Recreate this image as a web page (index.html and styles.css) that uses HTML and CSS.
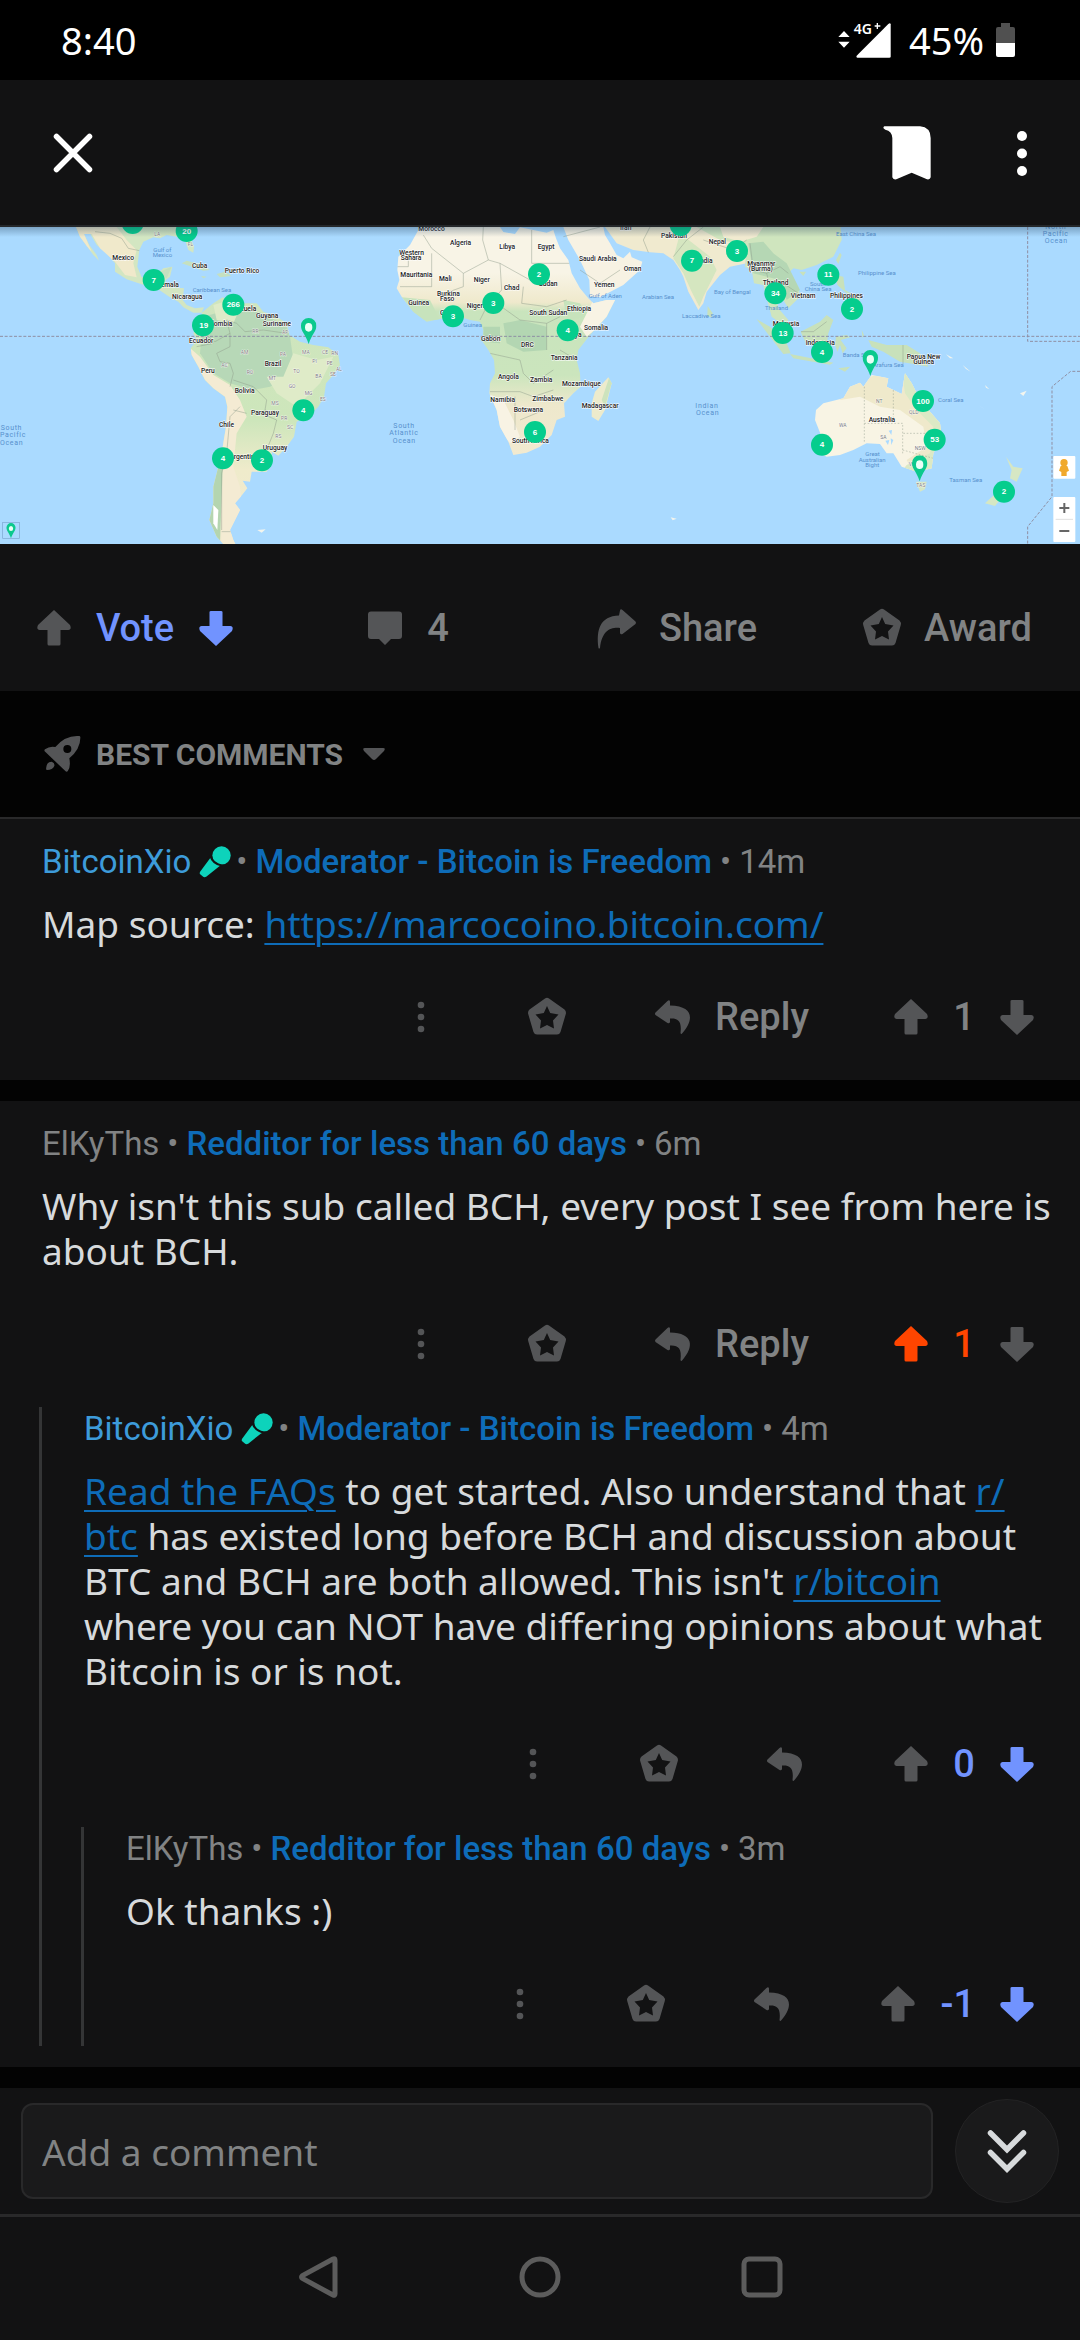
FILE: index.html
```html
<!DOCTYPE html>
<html lang="en">
<head>
<meta charset="utf-8">
<meta name="viewport" content="width=device-width, initial-scale=1">
<title>Comments</title>
<link rel="stylesheet" href="styles.css">
</head>
<body>
<svg class="sprite" aria-hidden="true">
  <symbol id="up" viewBox="0 0 48 48"><path d="M24 6 40 21Q42 25.500 38.500 26H30.500V40Q30.500 41.500 29 41.500H19Q17.500 41.500 17.500 40V26H9.500Q6 25.500 8 21Z"/></symbol>
  <symbol id="down" viewBox="0 0 48 48"><path d="M24 42 40 27Q42 22.500 38.500 22H30.500V8Q30.500 7 29 7H19Q17.500 7 17.500 8V22H9.500Q6 22.500 8 27Z"/></symbol>
  <symbol id="bubble" viewBox="0 0 48 48"><path d="M10 7.500H38Q41 7.500 41 10.500V32Q41 35 38 35H30L24 41 18 35H10Q7 35 7 32V10.500Q7 7.500 10 7.500Z"/></symbol>
  <symbol id="share" viewBox="0 0 48 48"><path d="M27 6.500Q27.500 4.500 29.500 6L42.500 17.500Q43.500 18.700 42.500 20L29.500 30Q27.500 31 27 29V24C17 23 9 27 7 44Q6 45 5.500 44C3 26 7 12 26 11.500Z"/></symbol>
  <symbol id="award" viewBox="0 0 48 48"><path fill-rule="evenodd" d="M22 5.500Q24 4 26 5.500L41.500 16.500Q43.500 18.500 42.800 21L37.500 39Q36.500 41.500 34 41.500H14Q11.500 41.500 10.500 39L5.200 21Q4.500 18.500 6.500 16.500ZM24 13 20.800 20 12.500 21.500 18 27.500 17 35.500 24 32 31 35.500 30 27.500 35.500 21.500 27.200 20Z"/></symbol>
  <symbol id="reply" viewBox="0 0 48 48"><path d="M21 8.500Q20.500 6.500 18.500 8L6.500 19.500Q5.500 20.700 6.500 22L18.500 30Q20.500 31 21 29V25.500C29 25 33 28 31.500 40Q32 42 33.500 40C45 27 45 13 21 12.500Z"/></symbol>
  <symbol id="dots" viewBox="0 0 48 48"><circle cx="24" cy="12" r="3.300"/><circle cx="24" cy="24" r="3.300"/><circle cx="24" cy="36" r="3.300"/></symbol>
  <symbol id="mic" viewBox="530 761 104 104"><circle cx="602" cy="793" r="28"/><path stroke="#121213" stroke-width="6" d="M568 795Q575 818 603 824L556 861Q549 865 541 858L533 851Q531 846 534 841Z"/></symbol>
  <symbol id="pin" viewBox="0 0 48 78"><path fill-rule="evenodd" d="M24 0A23 23 0 0 1 47 24C47 40 34 48 24 78 14 48 1 40 1 24A23 23 0 0 1 24 0ZM24 15A11 13 0 0 0 24 41 11 13 0 0 0 24 15Z"/></symbol>
</svg>

<div class="status">
  <span>8:40</span>
  <div class="status-right">
    <svg class="signal" viewBox="54 66 159 108" role="img" aria-label="4G plus signal"><path d="M55 111 72 93 89 111ZM55 125 72 143 89 125Z"/><path d="M212 73V170Q212 173 208 173H112Q107 172 110 167L205 72Q211 67 212 73Z"/><text x="101" y="101">4G</text><path d="M164 78H181M172 69V87" stroke="#fff" stroke-width="4"/></svg>
    <span>45%</span>
    <svg class="battery" viewBox="0 0 19 34" role="img" aria-label="Battery"><path fill="#505050" d="M5 0H14V4H17Q19 4 19 6V20H0V6Q0 4 2 4H5Z"/><path fill="#fff" d="M0 20H19V32Q19 34 17 34H2Q0 34 0 32Z"/></svg>
  </div>
</div>

<header class="appbar">
  <button class="icon-btn" aria-label="Close"><svg class="icon" viewBox="0 0 48 48"><path d="M7.500 7.500 40.500 40.500M40.500 7.500 7.500 40.500" stroke="#fff" stroke-width="5.500" stroke-linecap="round"/></svg></button>
  <div class="appbar-right">
    <button class="icon-btn" aria-label="Save"><svg class="bookmark" viewBox="177 377 168 168"><path d="M193 381H300Q332 384 332 416V534Q330 542 321 540L275 520 229 540Q219 542 217 534V416Q216 395 196 391 186 386 193 381Z"/></svg></button>
    <button class="icon-btn" aria-label="More options"><svg class="icon" viewBox="0 0 48 48"><circle cx="24" cy="7" r="5"/><circle cx="24" cy="24.500" r="5"/><circle cx="24" cy="42" r="5"/></svg></button>
  </div>
</header>

<main>
<figure class="map">
<svg viewBox="0 21 3240 951" role="img" aria-label="World map of merchants accepting Bitcoin">
  <defs>
    <linearGradient id="shade" x1="0" y1="0" x2="0" y2="1"><stop offset="0" stop-color="#24405a" stop-opacity=".35"/><stop offset="1" stop-color="#24405a" stop-opacity="0"/></linearGradient>
    <linearGradient id="sam" x1="0" y1="0" x2="0" y2="1"><stop offset="0" stop-color="#cfe5be"/><stop offset=".5" stop-color="#cde6bb"/><stop offset=".7" stop-color="#efebcb"/><stop offset="1" stop-color="#f2ead0"/></linearGradient>
    <linearGradient id="afr" x1="0" y1="0" x2="0" y2="1"><stop offset=".2" stop-color="#f8f4e6"/><stop offset=".33" stop-color="#efe9cc"/><stop offset=".37" stop-color="#c9e4bd"/><stop offset=".65" stop-color="#cbe5bd"/><stop offset=".78" stop-color="#eee8cc"/><stop offset="1" stop-color="#f2ead0"/></linearGradient>
    <clipPath id="sa-clip"><path id="sa" d="M605 278 640 250 668 232 700 250 770 250 790 275 830 290 860 310 868 345 900 365 940 375 985 382 1015 405 1020 435 1000 465 978 490 972 530 955 560 930 585 890 605 882 650 860 680 835 707 815 695 818 720 800 755 755 755 750 785 728 782 742 805 722 830 705 850 720 870 705 900 690 930 700 960 706 972 670 972 650 950 628 900 640 850 640 800 650 760 665 700 678 620 682 560 675 530 640 505 615 480 595 440 575 405 572 385 590 360 580 340 590 320 612 300Z"/></clipPath>
    <clipPath id="af-clip"><path id="af" d="M1260 21 1230 75 1195 110 1192 150 1198 180 1190 205 1205 230 1240 275 1280 305 1330 295 1380 290 1410 300 1440 305 1450 330 1448 365 1465 390 1482 420 1485 460 1470 490 1468 520 1490 570 1500 620 1525 665 1540 705 1580 698 1620 680 1655 645 1670 600 1695 590 1692 550 1720 520 1742 500 1740 460 1730 420 1735 390 1770 345 1820 290 1845 240 1820 240 1780 250 1765 235 1740 205 1715 160 1705 120 1680 85 1668 55 1660 30 1640 38 1600 30 1560 22 1545 42 1510 36 1500 21Z"/></clipPath>
    <clipPath id="au-clip"><path id="au" d="M2448 570 2470 550 2530 535 2550 500 2580 488 2590 500 2615 465 2665 475 2660 500 2705 522 2715 460 2735 490 2750 520 2790 575 2820 610 2825 650 2800 700 2795 745 2750 755 2705 740 2680 700 2660 700 2640 672 2600 670 2560 690 2520 705 2480 710 2460 700 2465 650 2445 600Z"/></clipPath>
  </defs>
  <rect y="21" width="3240" height="951" fill="#aadaff"/>
  <!-- North and Central America -->
  <path fill="#d3e6c2" d="M228 21 240 50 262 80 280 105 297 122 290 105 268 75 252 42 270 40 290 75 320 100 345 130 345 155 380 178 425 193 470 205 510 232 535 245 550 262 580 278 605 278 612 262 585 265 560 255 548 240 552 205 495 200 497 180 510 170 517 140 490 145 475 160 455 175 425 172 412 140 418 90 430 65 460 52 480 55 500 45 530 50 555 60 565 90 580 98 582 80 570 50 590 21Z"/>
  <path fill="#f0e9cb" d="M228 21 240 50 262 80 275 95 252 42 275 42 300 85 345 125 375 165 410 172 400 130 410 90 380 60 350 21Z"/>
  <path class="border" d="M285 35 330 40 365 55 385 85 418 92"/>
  <path fill="#c5e0c0" d="M545 130 560 122 600 132 630 150 610 152ZM650 162 675 155 695 168 660 172ZM603 168 620 170 610 175ZM470 160 515 140 500 175Z"/>
  <!-- South America -->
  <use href="#sa" fill="url(#sam)"/>
  <g clip-path="url(#sa-clip)">
    <path fill="#b7d8b7" d="M610 290 700 265 790 280 860 320 870 350 880 420 850 480 810 500 760 510 690 490 640 460 600 400Z"/>
    <path fill="#dfebc8" d="M640 255 690 240 720 265 700 310 650 300ZM880 400 950 420 1000 410 960 490 890 560 830 520 800 470 850 470Z"/>
    <path fill="#f4ebd3" d="M565 380 600 410 640 465 690 495 720 540 740 590 710 640 700 740 720 800 740 972 665 972 660 760 660 600 670 540 600 500Z"/>
    <path fill="#b4d5b0" d="M620 750 668 740 660 972 610 972Z"/>
    <path fill="#fff" d="M640 855 655 870 652 930 640 910Z"/>
    <path class="border" d="M610 340 645 365 690 340 680 300 710 310 735 335 790 330 860 340M590 380 640 370M690 340 690 380 650 400 660 425 690 430 700 460 690 500M700 480 760 500 800 540 795 570 820 580M720 560 690 590 680 700 665 760 665 930M760 570 830 600 820 640 800 690M700 570 740 580M665 935H700"/>
  </g>
  <!-- Africa -->
  <use href="#af" fill="url(#afr)"/>
  <g clip-path="url(#af-clip)">
    <path fill="#b3d6b2" d="M1510 310 1560 300 1640 320 1640 390 1570 395 1520 370ZM1450 320 1500 320 1500 370 1450 365Z"/>
    <path fill="#c7e3bc" d="M1690 240 1740 250 1760 290 1700 300ZM1190 230 1290 240 1320 300 1220 300Z"/>
    <path fill="#f8f3e4" d="M1780 240 1850 240 1820 300 1760 350 1740 320ZM1460 520 1510 540 1540 600 1560 650 1530 670 1490 620Z"/>
    <path class="border" d="M1270 45 1295 85 1390 160 1465 120 1448 60 1450 21M1190 100H1225V140H1190M1295 100V200H1200M1595 30V130H1710M1465 120 1500 130 1590 180M1500 130 1505 210 1460 260 1440 300M1390 160V200L1320 225M1570 200 1565 250 1640 260 1700 240M1490 250 1560 300 1640 310 1680 290M1640 310 1640 390M1470 400 1560 420 1570 460 1600 490 1660 450M1470 515H1560L1600 530 1660 510M1545 530V630M1560 600 1620 575M1730 420 1680 390"/>
  </g>
  <path fill="#edebcc" d="M1825 472 1835 490 1815 570 1795 603 1775 590 1775 550 1785 515Z"/>
  <path fill="#cde3bd" d="M1827 474 1835 490 1815 560 1805 540Z"/>
  <!-- Asia -->
  <path fill="#f7f2e3" d="M1690 21 1705 60 1740 120 1768 180 1770 230 1800 232 1870 195 1920 150 1927 125 1895 112 1890 95 1870 115 1850 105 1830 70 1815 45 1810 21Z"/>
  <path fill="#f0eacf" d="M1815 21 1850 70 1900 90 1950 97 1990 100 2020 120 2040 150 2050 170 2065 215 2095 270 2110 250 2120 215 2160 165 2190 140 2240 130 2270 100 2280 21Z"/>
  <path fill="#cfe5be" d="M2090 21 2160 60 2240 75 2235 140 2255 150 2262 190 2290 195 2300 235 2315 290 2355 320 2365 300 2335 265 2330 235 2350 240 2365 265 2400 230 2395 200 2365 160 2380 145 2405 150 2450 135 2500 110 2525 60 2522 21Z"/>
  <path fill="#d5e6c0" d="M2040 40 2130 110 2150 150 2110 230 2098 260 2075 215 2050 160 2020 115Z"/>
  <path fill="#f1ead0" d="M2160 21H2290L2270 50 2220 65 2170 50Z"/>
  <path fill="#b5d7b4" d="M2245 70 2290 65 2320 100 2360 130 2400 210 2360 240 2340 180 2260 160Z"/>
  <path class="border" d="M1690 50 1800 21M1740 150 1800 190 1860 150M1945 97 1930 60 1950 21M2020 110 2060 60 2110 21M2110 60 2200 90 2240 60M2250 70 2260 150 2300 160 2340 140 2365 160M2300 160 2310 200 2350 190 2395 220"/>
  <path fill="#c8e1bb" d="M2123 258 2138 280 2135 292 2122 288ZM2270 298 2310 320 2360 370 2372 400 2350 402 2310 350ZM2370 402 2460 420 2500 428 2490 434 2380 415ZM2402 335 2460 305 2480 285 2500 300 2485 340 2480 375 2420 375ZM2508 350 2540 345 2550 352 2522 360 2540 385 2528 400 2520 375 2512 395 2505 375ZM2605 360 2660 375 2720 375 2760 400 2785 440 2740 432 2700 425 2650 395 2615 380ZM2505 165 2530 170 2535 210 2560 225 2540 220 2512 195ZM2555 225 2580 235 2575 260 2560 255ZM2508 120 2520 98 2525 105 2515 132ZM2398 155 2418 155 2410 168ZM2515 445 2550 440 2535 455ZM2585 330 2592 345 2588 355Z"/>
  <path class="border" d="M2403 335 2440 335 2480 305M2709 375V432"/>
  <!-- Australia and New Zealand -->
  <use href="#au" fill="#f8f4e4"/>
  <g clip-path="url(#au-clip)">
    <path fill="#efe9cb" d="M2520 540 2560 480 2660 460 2730 450 2850 600 2830 760 2740 760 2720 720 2780 680 2770 620 2700 570 2640 560 2580 530Z"/>
    <path fill="#dce9c5" d="M2705 450 2740 480 2830 610 2820 760 2700 760 2720 735 2790 700 2800 620 2750 570 2715 520Z"/>
    <path class="border" d="M2593 490V670M2593 610H2708V700M2680 500V610M2710 640H2790L2830 635M2708 690 2800 715" stroke-dasharray="5 5"/>
    <path fill="#aadaff" d="M2666 632 2676 630 2674 645ZM2656 662 2668 660 2664 675ZM2672 655 2680 660 2674 675Z"/>
  </g>
  <path fill="#d6e7c4" d="M2748 785 2780 785 2775 808 2760 815ZM3018 710 3040 740 3068 745 3050 785 3030 775 3035 750ZM2955 850 3010 800 3020 815 2985 858Z"/>
  <path fill="#f3f5ee" d="M2838 403 2860 415 2850 415ZM2888 435 2912 455 2898 447ZM2935 555 2958 570 2945 562ZM3060 520 3080 512 3070 528ZM2955 495 2968 508 2958 503ZM2012 892 2030 896 2018 901ZM772 930 797 928 785 938Z"/>
  <!-- Equator and date line -->
  <path class="dash" d="M0 349H3240M3083 21V364H3240M3240 454H3212L3156 500V830L3083 920V972"/>
  <g class="sea">
    <text x="460" y="95">Gulf of</text><text x="458" y="112">Mexico</text><text x="578" y="216">Caribbean Sea</text>
    <text x="1766" y="233">Gulf of Aden</text><text x="1926" y="237">Arabian Sea</text><text x="2046" y="295">Laccadive Sea</text><text x="2142" y="223">Bay of Bengal</text><text x="1390" y="320">Guinea</text>
    <text x="2508" y="48">East China Sea</text><text x="2574" y="165">Philippine Sea</text><text x="2430" y="197">South</text><text x="2414" y="214">China Sea</text><text x="2295" y="270">Thailand</text><text x="2528" y="411">Banda Sea</text><text x="2618" y="441">Arafura Sea</text><text x="2814" y="547">Coral Sea</text><text x="2596" y="708">Great</text><text x="2576" y="725">Australian</text><text x="2596" y="741">Bight</text><text x="2848" y="787">Tasman Sea</text>
  </g>
  <g class="ocean">
    <text x="2" y="631">South</text><text x="0" y="652">Pacific</text><text x="0" y="674">Ocean</text>
    <text x="1180" y="624">South</text><text x="1168" y="646">Atlantic</text><text x="1178" y="668">Ocean</text>
    <text x="2086" y="563">Indian</text><text x="2088" y="585">Ocean</text><text x="3136" y="27">North</text><text x="3128" y="48">Pacific</text><text x="3134" y="70">Ocean</text>
  </g>
  <g class="land">
    <text x="337" y="121">Mexico</text><text x="576" y="143">Cuba</text><text x="674" y="160">Puerto Rico</text><text x="440" y="201">Guatemala</text><text x="516" y="236">Nicaragua</text><text x="676" y="273">Venezuela</text><text x="768" y="293">Guyana</text><text x="788" y="317">Suriname</text><text x="612" y="319">Colombia</text><text x="567" y="369">Ecuador</text><text x="794" y="439">Brazil</text><text x="603" y="460">Peru</text><text x="704" y="520">Bolivia</text><text x="753" y="586">Paraguay</text><text x="657" y="622">Chile</text><text x="788" y="691">Uruguay</text><text x="688" y="718">Argentina</text>
    <text x="1255" y="33">Morocco</text><text x="1350" y="74">Algeria</text><text x="1498" y="86">Libya</text><text x="1613" y="86">Egypt</text><text x="1198" y="105">Western</text><text x="1202" y="120">Sahara</text><text x="1201" y="170">Mauritania</text><text x="1317" y="182">Mali</text><text x="1421" y="186">Niger</text><text x="1512" y="210">Chad</text><text x="1616" y="198">Sudan</text><text x="1311" y="228">Burkina</text><text x="1320" y="243">Faso</text><text x="1225" y="255">Guinea</text><text x="1320" y="284">Ghana</text><text x="1400" y="263">Nigeria</text><text x="1588" y="284">South Sudan</text><text x="1701" y="274">Ethiopia</text><text x="1752" y="329">Somalia</text><text x="1690" y="350">Kenya</text><text x="1443" y="363">Gabon</text><text x="1563" y="382">DRC</text><text x="1652" y="419">Tanzania</text><text x="1494" y="476">Angola</text><text x="1590" y="486">Zambia</text><text x="1686" y="498">Mozambique</text><text x="1471" y="545">Namibia</text><text x="1597" y="542">Zimbabwe</text><text x="1541" y="576">Botswana</text><text x="1745" y="564">Madagascar</text><text x="1536" y="669">South Africa</text>
    <text x="1737" y="123">Saudi Arabia</text><text x="1871" y="153">Oman</text><text x="1782" y="202">Yemen</text><text x="1860" y="29">Iran</text><text x="1983" y="53">Pakistan</text><text x="2094" y="130">India</text><text x="2126" y="71">Nepal</text><text x="2242" y="137">Myanmar</text><text x="2246" y="152">(Burma)</text><text x="2288" y="195">Thailand</text><text x="2372" y="235">Vietnam</text><text x="2490" y="235">Philippines</text><text x="2318" y="319">Malaysia</text><text x="2417" y="375">Indonesia</text><text x="2720" y="416">Papua New</text><text x="2740" y="432">Guinea</text><text x="2606" y="605">Australia</text>
  </g>
  <g class="state">
    <text x="722" y="403">AM</text><text x="664" y="441">AC</text><text x="840" y="409">PA</text><text x="906" y="402">MA</text><text x="966" y="402">CE</text><text x="994" y="404">RN</text><text x="937" y="428">PI</text><text x="980" y="435">PE</text><text x="1008" y="452">AL</text><text x="990" y="468">SE</text><text x="880" y="460">TO</text><text x="806" y="480">MT</text><text x="740" y="461">RO</text><text x="946" y="474">BA</text><text x="866" y="503">GO</text><text x="914" y="525">MG</text><text x="814" y="556">MS</text><text x="843" y="600">PR</text><text x="861" y="628">SC</text><text x="826" y="653">RS</text><text x="960" y="543">ES</text><text x="757" y="339">RR</text><text x="846" y="341">AP</text><text x="463" y="48">LA</text><text x="563" y="78">FL</text>
    <text x="2628" y="548">NT</text><text x="2727" y="581">QLD</text><text x="2517" y="620">WA</text><text x="2641" y="656">SA</text><text x="2744" y="689">NSW</text><text x="2726" y="739">VIC</text><text x="2749" y="800">TAS</text>
  </g>
  <g fill="#05cd8d">
    <circle cx="398" cy="9" r="33"/><circle cx="560" cy="33" r="33"/><circle cx="461" cy="180" r="33"/><circle cx="700" cy="254" r="33"/><circle cx="609" cy="316" r="33"/><circle cx="910" cy="571" r="33"/><circle cx="669" cy="715" r="33"/><circle cx="786" cy="721" r="33"/>
    <circle cx="1617" cy="163" r="33"/><circle cx="1480" cy="249" r="33"/><circle cx="1359" cy="289" r="33"/><circle cx="1703" cy="331" r="33"/><circle cx="1605" cy="636" r="33"/><circle cx="2042" cy="15" r="33"/><circle cx="2076" cy="122" r="33"/>
    <circle cx="2211" cy="93" r="33"/><circle cx="2485" cy="164" r="33"/><circle cx="2326" cy="220" r="33"/><circle cx="2556" cy="267" r="33"/><circle cx="2348" cy="339" r="33"/><circle cx="2466" cy="396" r="33"/><circle cx="2769" cy="543" r="33"/><circle cx="2804" cy="659" r="33"/><circle cx="2466" cy="674" r="33"/><circle cx="3012" cy="815" r="33"/>
  </g>
  <g class="count">
    <text x="560" y="41">20</text><text x="461" y="188">7</text><text x="700" y="262">266</text><text x="611" y="324">19</text><text x="910" y="579">4</text><text x="669" y="723">4</text><text x="786" y="729">2</text>
    <text x="1617" y="171">2</text><text x="1480" y="257">3</text><text x="1359" y="297">3</text><text x="1703" y="339">4</text><text x="1605" y="644">6</text><text x="2076" y="130">7</text>
    <text x="2211" y="101">3</text><text x="2485" y="172">11</text><text x="2326" y="228">34</text><text x="2556" y="275">2</text><text x="2349" y="347">13</text><text x="2466" y="404">4</text><text x="2769" y="551">100</text><text x="2804" y="667">53</text><text x="2466" y="682">4</text><text x="3012" y="823">2</text>
  </g>
  <g fill="#eafff6"><circle cx="926" cy="322" r="15"/><circle cx="2611" cy="418" r="15"/><circle cx="2759" cy="734" r="15"/><circle cx="33" cy="925" r="11"/></g>
  <g fill="#0bc98d"><use href="#pin" x="902" y="294" width="48" height="78"/><use href="#pin" x="2587" y="390" width="48" height="78"/><use href="#pin" x="2735" y="706" width="48" height="78"/><use href="#pin" x="17" y="909" width="32" height="46"/></g>
  <rect x="8" y="907" width="50" height="48" fill="none" stroke="#7ba5cf" stroke-width="2"/>
  <!-- Street view and zoom controls -->
  <g fill="#fff"><rect x="3160" y="708" width="66" height="68" rx="3"/><rect x="3160" y="831" width="66" height="135" rx="3"/></g>
  <g fill="#f0a92c"><circle cx="3192" cy="728" r="11"/><path d="M3182 738H3202L3207 752 3200 756V768H3184V756L3177 752Z"/></g>
  <path d="M3178 864H3208M3193 849V879M3178 933H3208" stroke="#666" stroke-width="6"/><path d="M3167 898H3219" stroke="#e0e0e0" stroke-width="3"/>
  <rect y="21" width="3240" height="30" fill="url(#shade)"/>
</svg>
</figure>

<section class="post-actions" aria-label="Post actions">
  <div class="post-action"><button class="act" aria-label="Upvote post"><svg class="icon"><use href="#up"/></svg></button><span class="cold">Vote</span><button class="act cold" aria-label="Downvote post"><svg class="icon"><use href="#down"/></svg></button></div>
  <button class="post-action" aria-label="4 comments"><svg class="icon"><use href="#bubble"/></svg><span>4</span></button>
  <button class="post-action"><svg class="icon"><use href="#share"/></svg><span>Share</span></button>
  <button class="post-action"><svg class="icon"><use href="#award"/></svg><span>Award</span></button>
</section>

<button class="sort"><svg class="icon" viewBox="53 423 144 144"><path fill-rule="evenodd" d="M176 441Q181 441 180 447 180 480 147 508 152 535 142 547 138 550 135 546L73 487Q71 484 74 481 88 470 105 474 135 438 176 441ZM141 468A12 12 0 0 0 141 492 12 12 0 0 0 141 468ZM80 543Q76 543 78 534 80 518 94 518 104 522 102 531 97 543 80 543Z"/></svg><span>BEST COMMENTS</span><svg class="caret" viewBox="0 0 22 14"><path d="M2 1H20Q23 1 21 4L13 12Q11 14 9 12L1 4Q-1 1 2 1Z"/></svg></button>

<article class="thread">
  <div class="meta"><a class="mod" href="#">BitcoinXio</a><svg class="mic"><use href="#mic"/></svg><span class="tight">•</span><b>Moderator - Bitcoin is Freedom</b><span>•</span><time>14m</time></div>
  <p>Map source: <a href="#">https://marcocoino.bitcoin.com/</a></p>
  <div class="actions">
    <button class="act" aria-label="More"><svg class="icon"><use href="#dots"/></svg></button>
    <button class="act" aria-label="Award"><svg class="icon"><use href="#award"/></svg></button>
    <button class="act"><svg class="icon"><use href="#reply"/></svg><span>Reply</span></button>
    <div class="votes"><button class="act" aria-label="Upvote"><svg class="icon"><use href="#up"/></svg></button><span>1</span><button class="act" aria-label="Downvote"><svg class="icon"><use href="#down"/></svg></button></div>
  </div>
</article>

<article class="thread">
  <div class="meta"><a href="#">ElKyThs</a><span>•</span><b>Redditor for less than 60 days</b><span>•</span><time>6m</time></div>
  <p>Why isn't this sub called BCH, every post I see from here is about BCH.</p>
  <div class="actions">
    <button class="act" aria-label="More"><svg class="icon"><use href="#dots"/></svg></button>
    <button class="act" aria-label="Award"><svg class="icon"><use href="#award"/></svg></button>
    <button class="act"><svg class="icon"><use href="#reply"/></svg><span>Reply</span></button>
    <div class="votes"><button class="act hot" aria-label="Upvote"><svg class="icon"><use href="#up"/></svg></button><span class="hot">1</span><button class="act" aria-label="Downvote"><svg class="icon"><use href="#down"/></svg></button></div>
  </div>
  <div class="replies">
    <div class="meta"><a class="mod" href="#">BitcoinXio</a><svg class="mic"><use href="#mic"/></svg><span class="tight">•</span><b>Moderator - Bitcoin is Freedom</b><span>•</span><time>4m</time></div>
    <p><a href="#">Read the FAQs</a> to get started. Also understand that <a href="#">r/<wbr>btc</a> has existed long before BCH and discussion about BTC and BCH are both allowed. This isn't <a href="#">r/bitcoin</a> where you can NOT have differing opinions about what Bitcoin is or is not.</p>
    <div class="actions">
      <button class="act" aria-label="More"><svg class="icon"><use href="#dots"/></svg></button>
      <button class="act" aria-label="Award"><svg class="icon"><use href="#award"/></svg></button>
      <button class="act" aria-label="Reply"><svg class="icon"><use href="#reply"/></svg></button>
      <div class="votes"><button class="act" aria-label="Upvote"><svg class="icon"><use href="#up"/></svg></button><span class="cold">0</span><button class="act cold" aria-label="Downvote"><svg class="icon"><use href="#down"/></svg></button></div>
    </div>
    <div class="replies">
      <div class="meta"><a href="#">ElKyThs</a><span>•</span><b>Redditor for less than 60 days</b><span>•</span><time>3m</time></div>
      <p>Ok thanks :)</p>
      <div class="actions">
        <button class="act" aria-label="More"><svg class="icon"><use href="#dots"/></svg></button>
        <button class="act" aria-label="Award"><svg class="icon"><use href="#award"/></svg></button>
        <button class="act" aria-label="Reply"><svg class="icon"><use href="#reply"/></svg></button>
        <div class="votes"><button class="act" aria-label="Upvote"><svg class="icon"><use href="#up"/></svg></button><span class="cold">-1</span><button class="act cold" aria-label="Downvote"><svg class="icon"><use href="#down"/></svg></button></div>
      </div>
    </div>
  </div>
</article>
</main>

<footer>
  <form class="composer">
    <input type="text" placeholder="Add a comment" aria-label="Add a comment">
    <button type="button" class="next" aria-label="Next comment"><svg class="icon" viewBox="0 0 48 48"><path d="M7.500 6 24 22.500 40.500 6M7.500 25.500 24 42 40.500 25.500" fill="none" stroke="#d7dadc" stroke-width="5.500" stroke-linecap="round"/></svg></button>
  </form>
  <nav class="sysnav" aria-label="System navigation">
    <button class="icon-btn" aria-label="Back"><svg class="icon nav" viewBox="0 0 48 48"><path d="M41 7V41Q41 43 39 42L8.500 25.500Q6.500 24 8.500 22.500L39 6Q41 5 41 7Z"/></svg></button>
    <button class="icon-btn" aria-label="Home"><svg class="icon nav" viewBox="0 0 48 48"><circle cx="24" cy="24" r="18"/></svg></button>
    <button class="icon-btn" aria-label="Recent apps"><svg class="icon nav" viewBox="0 0 48 48"><rect x="6" y="6" width="36" height="36" rx="5"/></svg></button>
  </nav>
</footer>
</body>
</html>
```

FILE: styles.css
```css
* { box-sizing: border-box; margin: 0; }

body {
  min-height: 100vh;
  background: #030303;
  color: #d7dadc;
  font-family: "Noto Sans", sans-serif;
  font-size: 37px;
  line-height: 45px;
}

button {
  padding: 0;
  border: 0;
  background: none;
  color: inherit;
  font: inherit;
  cursor: pointer;
}

a { color: #0e6cb8; text-decoration-thickness: 2px; text-underline-offset: 5px; }

svg { display: block; flex: none; }
.sprite { display: none; }
.icon { width: 48px; height: 48px; fill: currentColor; }

/* System status bar */
.status {
  display: flex;
  align-items: center;
  justify-content: space-between;
  height: 80px;
  padding: 0 65px 0 61px;
  background: #000;
  color: #fff;
  font-size: 38px;
}
.status-right { display: flex; align-items: center; gap: 12px; }
.signal { width: 53px; height: 36px; margin-right: 6px; fill: #fff; }
.signal text { font-size: 42px; font-weight: 600; }
.battery { width: 19px; height: 34px; }

/* Post toolbar */
.appbar {
  display: flex;
  align-items: center;
  justify-content: space-between;
  height: 147px;
  padding: 0 34px 0 49px;
  border-bottom: 2px solid #24272a;
  background: #121213;
  color: #fff;
}
.appbar-right { display: flex; align-items: center; gap: 63px; }
.bookmark { width: 56px; height: 56px; fill: currentColor; }

/* Map picture */
.map svg { width: 100%; height: auto; }
.border { fill: none; stroke: #8f9c8a; stroke-width: 2; opacity: .7; }
.dash { fill: none; stroke: #8f8fa3; stroke-width: 3; stroke-dasharray: 9 5; }
.sea { fill: #5790cd; font-family: Roboto, sans-serif; font-size: 18px; }
.ocean { fill: #5790cd; font-family: Roboto, sans-serif; font-size: 21px; letter-spacing: 2px; }
.land { fill: #222; stroke: #fff; stroke-width: 3px; paint-order: stroke; font-family: Roboto, sans-serif; font-size: 20px; font-weight: 500; }
.state { fill: #777; stroke: #fff; stroke-width: 2px; paint-order: stroke; font-family: Roboto, sans-serif; font-size: 15px; }
.count { fill: #fff; font-family: "Liberation Sans", sans-serif; font-size: 24px; font-weight: 700; text-anchor: middle; }

/* Post actions */
.post-actions {
  display: grid;
  grid-template-columns: repeat(4, 1fr);
  padding: 42px 0 21px;
  background: #121213;
  color: #818384;
  font-family: Roboto, sans-serif;
  font-size: 38px;
  font-weight: 500;
}
.post-action { display: flex; align-items: center; justify-content: center; gap: 18px; height: 84px; }
.post-action .icon, .actions .icon { color: #545557; }
.act { display: flex; align-items: center; gap: 18px; }
.cold, .cold.act .icon { color: #7193ff; }
.hot, .hot.act .icon { color: #ff4500; }

.sort {
  display: flex;
  align-items: center;
  gap: 10px;
  width: 100%;
  height: 128px;
  padding: 0 38px;
  border-bottom: 2px solid #29292a;
  color: #818384;
  font-family: Roboto, sans-serif;
  font-size: 30px;
  font-weight: 700;
}
.sort .icon, .sort .caret { color: #545557; }
.caret { width: 22px; height: 14px; margin-left: 10px; fill: currentColor; }

/* Comments */
.thread { padding: 21px 0 21px 42px; background: #121213; }
.thread + .thread { margin-top: 21px; }
.meta {
  display: flex;
  align-items: center;
  height: 44px;
  margin-bottom: 17px;
  color: #818384;
  font-family: Roboto, sans-serif;
  font-size: 33px;
  line-height: 44px;
}
.meta a { color: inherit; text-decoration: none; }
.meta .mod { color: #3d9bda; }
.meta b { color: #0e6cb8; font-weight: 500; }
.meta span { margin: 0 8px; }
.meta .tight { margin-left: 4px; }
.mic { width: 34px; height: 34px; margin-left: 7px; fill: #0dd3bb; }
.thread p { padding-right: 25px; margin-bottom: 29px; }
.actions {
  display: flex;
  align-items: center;
  justify-content: flex-end;
  gap: 78px;
  height: 84px;
  padding-right: 39px;
  color: #818384;
  font-family: Roboto, sans-serif;
  font-size: 38px;
  font-weight: 500;
}
.votes { display: flex; align-items: center; gap: 18px; }
.votes span { min-width: 22px; text-align: center; }
.replies { margin: 21px 0 0 -3px; padding-left: 42px; border-left: 3px solid #343536; }

/* Comment box */
.composer {
  display: flex;
  align-items: center;
  gap: 22px;
  height: 126px;
  margin-top: 21px;
  padding: 0 21px;
  background: #121213;
}
.composer input {
  flex: 1;
  min-width: 0;
  height: 96px;
  padding: 0 19px;
  border: 2px solid #29292a;
  border-radius: 12px;
  background: #1a1a1b;
  color: #d7dadc;
  font: inherit;
}
.composer input::placeholder { color: #818384; opacity: 1; }
.next {
  display: flex;
  align-items: center;
  justify-content: center;
  width: 104px;
  height: 104px;
  border: 1px solid #232324;
  border-radius: 50%;
  background: #1a1a1b;
}

/* System navigation */
.sysnav {
  display: flex;
  justify-content: center;
  gap: 174px;
  padding: 36px 0 39px;
  border-top: 3px solid #29292a;
  background: #121213;
}
.nav { fill: none; stroke: #5c5c5c; stroke-width: 5; }
```
